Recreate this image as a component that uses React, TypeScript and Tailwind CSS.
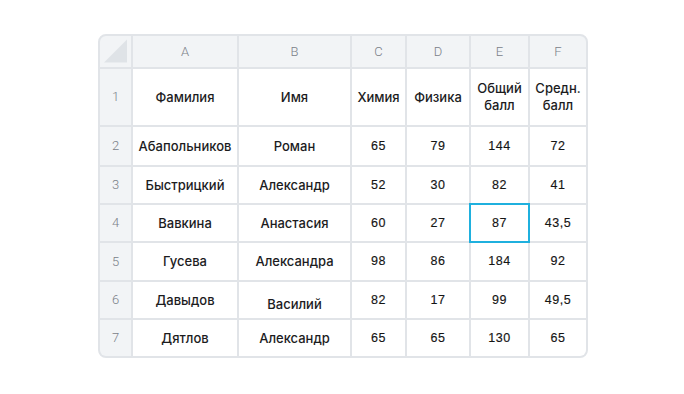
import React from "react";

const cols = ["A", "B", "C", "D", "E", "F"];

const rows: string[][] = [
  ["Фамилия", "Имя", "Химия", "Физика", "Общий\nбалл", "Средн.\nбалл"],
  ["Абапольников", "Роман", "65", "79", "144", "72"],
  ["Быстрицкий", "Александр", "52", "30", "82", "41"],
  ["Вавкина", "Анастасия", "60", "27", "87", "43,5"],
  ["Гусева", "Александра", "98", "86", "184", "92"],
  ["Давыдов", "Василий", "82", "17", "99", "49,5"],
  ["Дятлов", "Александр", "65", "65", "130", "65"],
];

function Cell({ text, row, col }: { text: string; row: number; col: number }) {
  const isNumber = row > 0 && col >= 2;
  const selected = row === 3 && col === 4;
  const dropped = row === 5 && col === 1;
  return (
    <div className="relative flex items-center justify-center bg-white text-center">
      <span
        className={
          isNumber
            ? "font-['Liberation_Sans',Arial,sans-serif] text-[12.5px] tracking-[0.5px] text-[#151515] [-webkit-text-stroke:0.15px_#151515]"
            : "whitespace-pre-line font-['Inter','Noto_Sans',sans-serif] text-[13px] font-medium leading-[17px] text-[#1c1c1e]" +
              (dropped ? " mt-2" : "")
        }
      >
        {text}
      </span>
      {selected && (
        <div className="absolute -inset-[2px] border-2 border-[#1fb0de]" />
      )}
    </div>
  );
}

const headCls =
  "flex items-center justify-center bg-[#f2f4f6] font-['Roboto',sans-serif] text-[13px] font-light text-[#7a8088]";

export default function App() {
  return (
    <div className="h-[394px] w-[684px] bg-white pl-[98px] pt-[34px]">
      <div className="grid w-fit grid-cols-[31px_104px_111px_53px_62px_57px_56px] grid-rows-[31px_56px_38px_36px_36px_37px_36px_36px] gap-[2px] overflow-hidden rounded-[8px] border-2 border-[#e1e4e8] bg-[#e1e4e8]">
        {/* corner */}
        <div className="flex items-end justify-end bg-[#f2f4f6] p-[4px]">
          <svg width="24" height="24" viewBox="0 0 24 24">
            <polygon points="24,0 24,24 0,24" fill="#dfe3e7" />
          </svg>
        </div>
        {cols.map((c) => (
          <div key={c} className={headCls}>
            {c}
          </div>
        ))}
        {rows.map((r, ri) => (
          <React.Fragment key={ri}>
            <div className={headCls}>{ri + 1}</div>
            {r.map((t, ci) => (
              <Cell key={ci} text={t} row={ri} col={ci} />
            ))}
          </React.Fragment>
        ))}
      </div>
    </div>
  );
}
